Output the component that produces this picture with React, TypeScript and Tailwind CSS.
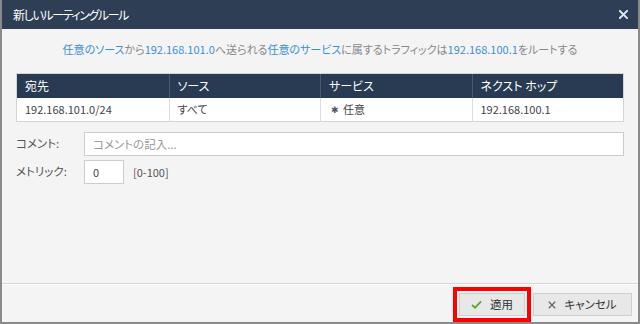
import React from 'react';

const font = { fontFamily: '"Noto Sans CJK JP", "Noto Sans", sans-serif' };

const columns = ['宛先', 'ソース', 'サービス', 'ネクスト ホップ'];

const App = () => {
    return (
        <div className="w-[640px] h-[324px] flex flex-col bg-[#f4f4f4] border-l-2 border-r-2 border-b-2 border-[#8a8a8a] overflow-hidden [font-feature-settings:'palt']" style={font}>
            {/* title bar */}
            <div className="h-[29px] shrink-0 bg-[#2d3e55] flex items-center justify-between pl-[11px] pr-[10px]">
                <span className="text-[12px] text-white leading-none tracking-[-1.4px]">新しいルーティングルール</span>
                <svg width="9" height="9" viewBox="0 0 10 10" className="text-[#dfe6ef]">
                    <path d="M1 1 L9 9 M9 1 L1 9" stroke="currentColor" strokeWidth="2.2" strokeLinecap="square" />
                </svg>
            </div>

            {/* body */}
            <div className="flex-1 flex flex-col px-[14px]">
                <p className="text-[11px] text-[#888] text-center mt-[13px] leading-[14px]">
                    <span className="text-[#3b8fd9]">任意のソース</span>から
                    <span className="text-[#3b8fd9]">192.168.101.0</span>へ送られる
                    <span className="text-[#3b8fd9]">任意のサービス</span>に属するトラフィックは
                    <span className="text-[#3b8fd9]">192.168.100.1</span>をルートする
                </p>

                <div className="mt-[17px] border border-[#d4d4d4]">
                    <div className="grid grid-cols-4 h-[24px] bg-[#283b53]">
                        {columns.map((c, i) => (
                            <div key={c} className={`flex items-center pl-[8px] text-[12px] text-white ${i > 0 ? 'border-l border-[#4a5a70]' : ''}`}>{c}</div>
                        ))}
                    </div>
                    <div className="grid grid-cols-4 h-[23px] bg-white text-[11px] text-[#444]">
                        <div className="flex items-center pl-[8px]">192.168.101.0/24</div>
                        <div className="flex items-center pl-[8px] border-l border-[#ddd]">すべて</div>
                        <div className="flex items-center pl-[10px] border-l border-[#ddd] gap-[4px]">
                            <span className="text-[9px] text-[#556]">✱</span>任意
                        </div>
                        <div className="flex items-center pl-[8px] border-l border-[#ddd]">192.168.100.1</div>
                    </div>
                </div>

                <div className="flex items-center mt-[10px]">
                    <label className="w-[68px] text-[11.5px] text-[#555]">コメント:</label>
                    <input
                        type="text"
                        placeholder="コメントの記入..."
                        className="flex-1 h-[24px] bg-white border border-[#ccc] px-[8px] text-[11.5px] outline-none placeholder:text-[#999]"
                    />
                </div>

                <div className="flex items-center mt-[4px]">
                    <label className="w-[68px] text-[11.5px] text-[#555]">メトリック:</label>
                    <input
                        type="text"
                        defaultValue="0"
                        className="w-[40px] h-[24px] bg-white border border-[#ccc] px-[8px] text-[11px] text-[#444] outline-none"
                    />
                    <span className="ml-[9px] text-[11px] text-[#555]">[0-100]</span>
                </div>
            </div>

            {/* footer */}
            <div className="h-[39px] shrink-0 border-t border-[#d6d6d6] shadow-[inset_0_1px_0_#ffffff] flex items-end justify-end pr-[6px] pt-[2px]">
                <div className="flex items-center gap-[2px]">
                    <div className="border-[4px] border-[#ff0000] p-[2px]">
                        <button className="w-[66px] h-[23px] bg-[#e8e8e8] border border-[#cfcfcf] flex items-center justify-center gap-[8px] text-[11.5px] text-[#333]">
                            <svg width="11" height="9" viewBox="0 0 12 10">
                                <path d="M1 5.5 L4.5 8.5 L11 1.5" stroke="#5aa832" strokeWidth="2" fill="none" />
                            </svg>
                            適用
                        </button>
                    </div>
                    <button className="w-[99px] h-[23px] self-start mt-[6px] bg-[#e8e8e8] border border-[#cfcfcf] flex items-center justify-center gap-[8px] text-[11.5px] text-[#333]">
                        <svg width="8" height="8" viewBox="0 0 10 10">
                            <path d="M1 1 L9 9 M9 1 L1 9" stroke="#666" strokeWidth="1.6" />
                        </svg>
                        キャンセル
                    </button>
                </div>
            </div>
        </div>
    );
};

export default App;
